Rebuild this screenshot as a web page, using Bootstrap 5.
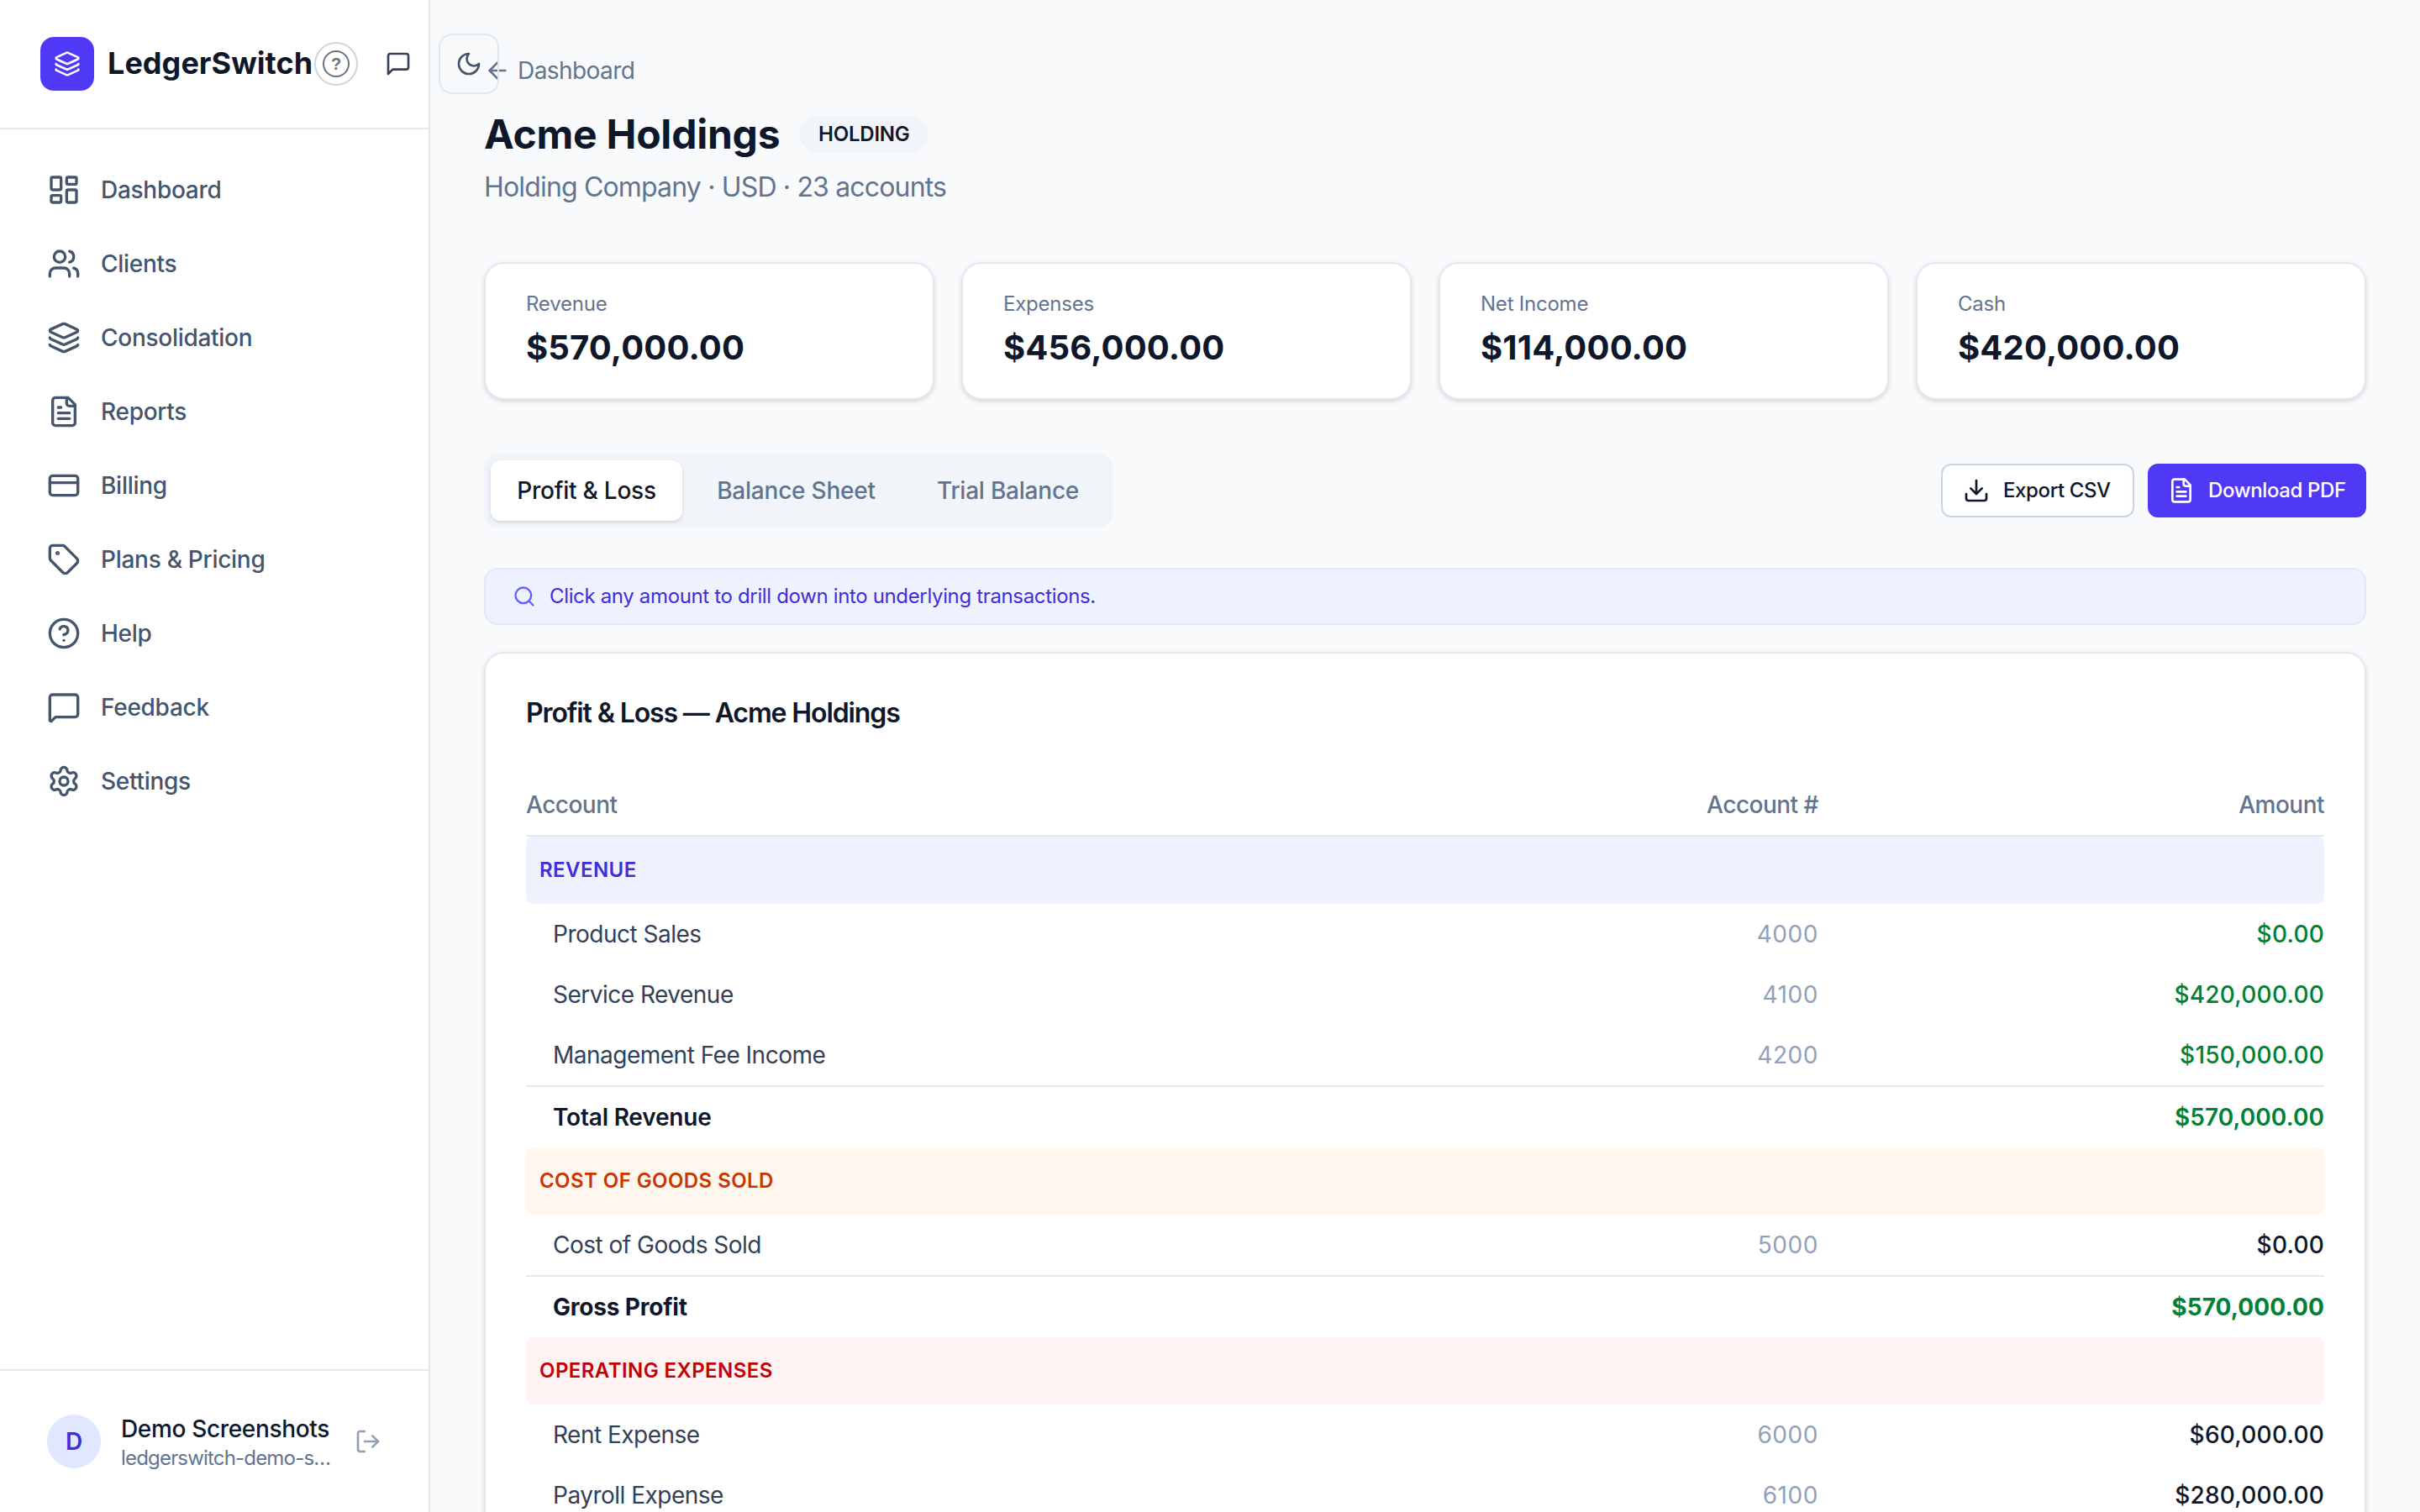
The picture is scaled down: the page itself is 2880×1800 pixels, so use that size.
<!DOCTYPE html>
<html lang="en">
  <head>
    <meta charset="UTF-8">
    <meta name="viewport" content="width=device-width, initial-scale=1.0">
    <title>Acme Holdings - LedgerSwitch</title>
    <link href="https://cdn.jsdelivr.net/npm/bootstrap@5.3.3/dist/css/bootstrap.min.css" rel="stylesheet">
    <style>
      :root { font-size: 32px; }
      body { font-family: Inter, "Liberation Sans", sans-serif; font-size: 28px; line-height: 40px; letter-spacing: -0.008em; color: #0f172b; background: #f8fafc; }
      svg { fill: none; stroke: currentColor; stroke-width: 2; stroke-linecap: round; stroke-linejoin: round; width: 32px; height: 32px; flex-shrink: 0; }
      .fs-12 { font-size: 24px; line-height: 32px; }
      .fw-medium { font-weight: 500; }
      .line { border: 0 solid #e2e8f0; }
      .slate { color: #62748e; }

      /* sidebar */
      .sidebar { width: 512px; border-right-width: 2px; z-index: 2; }
      .brand-bar { height: 154px; border-bottom-width: 2px; }
      .brand { width: 326px; }
      .brand-name { font-size: 36px; font-weight: 700; letter-spacing: 0.001em; padding-bottom: 2px; }
      .logo { width: 64px; height: 64px; border-radius: 16px; background: #4f39f6; }
      .help-btn { width: 52px; height: 52px; border: 2px solid #d1d5dc; color: #6a7282; }
      .help-mark { width: 32px; height: 32px; border: 2px solid #6a7282; font: bold 20px/28px "Liberation Sans", sans-serif; }
      .icon-btn { width: 72px; height: 72px; border-radius: 16px; color: #364153; }
      .theme-btn { border: 2px solid #e2e8f0; color: #45556c; }
      .bar-actions { gap: 12px; }
      .side-nav { gap: 8px; }
      .side-nav .nav-link { height: 80px; padding: 0 24px; gap: 24px; color: #45556c; font-weight: 500; letter-spacing: -0.01em; }
      .side-nav svg { width: 40px; height: 40px; }
      .user-bar { height: 170px; border-top-width: 2px; padding: 0 56px; }
      .avatar { width: 64px; height: 64px; background: #e0e7ff; color: #432dd7; font-weight: 600; }
      .user-text { width: 250px; margin-left: 24px; margin-right: 28px; padding-top: 3px; }
      .user-name { line-height: 36px; letter-spacing: -0.012em; }
      .user-mail { font-size: 24px; line-height: 34px; letter-spacing: -0.034em; }
      .logout { color: #90a1b9; }

      /* page */
      .page { padding: 64px 64px 0; }
      .back-link { gap: 8px; margin-bottom: 24px; letter-spacing: -0.02em; }
      .title-row { gap: 24px; height: 64px; }
      .title-row h1 { font-size: 48px; line-height: 60px; font-weight: 700; letter-spacing: -0.005em; padding-bottom: 1px; }
      .tag { height: 44px; width: 152px; background: #f1f5f9; font-size: 24px; font-weight: 600; line-height: 44px; letter-spacing: -0.01em; }
      .subtitle { font-size: 32px; line-height: 46px; height: 48px; margin: 8px 0 64px; letter-spacing: -0.026em; }
      .panel { background: #fff; border: 2px solid #e2e8f0; border-radius: 24px; box-shadow: 0 2px 6px rgba(0,0,0,.1), 0 2px 4px -2px rgba(0,0,0,.1); }
      .stats { grid-template-columns: repeat(4, 1fr); margin-bottom: 64px; }
      .stat { height: 164px; padding: 32px 48px 0; }
      .stat-value { font-size: 40px; font-weight: 700; line-height: 56px; letter-spacing: 0.004em; margin-top: 8px; }
      .tab-strip { background: #f1f5f9; border-radius: 16px; padding: 8px; gap: 8px; }
      .tab-strip .nav-link { height: 72px; padding: 0; border-radius: 12px; color: #62748e; font-weight: 500; line-height: 72px; text-align: center; }
      .tab-strip .nav-link.active { color: #0f172b; background: #fff; box-shadow: 0 2px 6px rgba(0,0,0,.1), 0 2px 4px -2px rgba(0,0,0,.1); }
      .tab-pl { width: 228px; }
      .tab-bs { width: 255px; }
      .tab-tb { width: 233px; }
      .action { height: 64px; padding: 0 24px; gap: 16px; border-width: 2px; border-radius: 12px; font-size: 24px; font-weight: 500; letter-spacing: -0.016em; }
      .export { width: 230px; border-color: #cad5e2; background: #fff; color: #0f172b; }
      .download { width: 260px; padding: 0 22px; border-color: #4f39f6; background: #4f39f6; color: #fff; }
      .hint { height: 68px; margin: 48px 0 32px; padding: 0 32px; gap: 16px; background: #eef2ff; border: 2px solid #e0e7ff; border-radius: 16px; color: #432dd7; letter-spacing: -0.0145em; }
      .hint svg { width: 28px; height: 28px; color: #615fff; }
      .report { padding: 47px 48px 48px; }
      .report h2 { font-size: 32px; font-weight: 600; line-height: 48px; letter-spacing: -0.035em; margin-bottom: 49px; }

      /* profit and loss table */
      .ledger { table-layout: fixed; border-collapse: separate; border-spacing: 0; color: #0f172b; }
      .ledger th, .ledger td { padding: 0; height: 72px; vertical-align: middle; }
      .ledger thead th { height: 74px; border-bottom: 2px solid #e2e8f0; color: #62748e; font-weight: 500; letter-spacing: -0.018em; }
      .ledger tbody td:first-child { padding-left: 32px; color: #314158; letter-spacing: -0.018em; }
      .ledger td:nth-child(2) { color: #90a1b9; letter-spacing: 0.02em; }
      .ledger td:nth-child(3) { font-weight: 500; letter-spacing: 0.008em; }
      .ledger .gain { color: #008236; }
      .ledger .sum td { height: 74px; border-top: 2px solid #e2e8f0; font-weight: 600; letter-spacing: 0.003em; }
      .ledger .sum td:first-child { color: #0f172b; letter-spacing: -0.007em; }
      .ledger .sum .strong { font-weight: 700; }
      .ledger tbody .band td:first-child { height: 80px; padding-left: 16px; border-radius: 8px; font-size: 24px; font-weight: 600; letter-spacing: 0.018em; }
      .ledger tbody .band-rev td:first-child { background: #eef2ff; color: #432dd7; }
      .ledger tbody .band-cogs td:first-child { background: #fff7ed; color: #ca3500; }
      .ledger tbody .band-opex td:first-child { background: #fef2f2; color: #c10007; }
      .col-num { width: 400px; }
      .col-amt { width: 602px; }
    </style>
  </head>
  <body class="d-flex vh-100 overflow-hidden">
    <aside class="sidebar line bg-white d-flex flex-column flex-shrink-0 position-relative">
      <div class="brand-bar line d-flex align-items-center ps-4">
        <div class="brand d-flex align-items-center gap-2 flex-shrink-0">
          <span class="logo d-flex align-items-center justify-content-center text-white">
            <svg viewBox="0 0 24 24"><path d="M12.83 2.18a2 2 0 0 0-1.66 0L2.6 6.08a1 1 0 0 0 0 1.83l8.58 3.91a2 2 0 0 0 1.66 0l8.58-3.9a1 1 0 0 0 0-1.83z"/><path d="M2 12a1 1 0 0 0 .58.91l8.6 3.91a2 2 0 0 0 1.65 0l8.58-3.9A1 1 0 0 0 22 12"/><path d="M2 17a1 1 0 0 0 .58.91l8.6 3.91a2 2 0 0 0 1.65 0l8.58-3.9A1 1 0 0 0 22 17"/></svg>
          </span>
          <span class="brand-name">LedgerSwitch</span>
        </div>
        <div class="bar-actions d-flex align-items-center flex-shrink-0">
          <a class="help-btn rounded-circle d-flex align-items-center justify-content-center text-decoration-none" href="#"><span class="help-mark rounded-circle text-center">?</span></a>
          <a class="icon-btn d-flex align-items-center justify-content-center" href="#">
            <svg viewBox="0 0 24 24"><path d="M21 15a2 2 0 0 1-2 2H7l-4 4V5a2 2 0 0 1 2-2h14a2 2 0 0 1 2 2z"/></svg>
          </a>
          <a class="icon-btn theme-btn d-flex align-items-center justify-content-center" href="#">
            <svg viewBox="0 0 24 24"><path d="M12 3a6 6 0 0 0 9 9 9 9 0 1 1-9-9Z"/></svg>
          </a>
        </div>
      </div>
      <nav class="side-nav nav flex-column flex-nowrap p-3 flex-grow-1">
        <a class="nav-link d-flex align-items-center" href="#">
          <svg viewBox="0 0 24 24"><rect width="7" height="9" x="3" y="3" rx="1"/><rect width="7" height="5" x="14" y="3" rx="1"/><rect width="7" height="9" x="14" y="12" rx="1"/><rect width="7" height="5" x="3" y="16" rx="1"/></svg>
          Dashboard
        </a>
        <a class="nav-link d-flex align-items-center" href="#">
          <svg viewBox="0 0 24 24"><path d="M16 21v-2a4 4 0 0 0-4-4H6a4 4 0 0 0-4 4v2"/><circle cx="9" cy="7" r="4"/><path d="M22 21v-2a4 4 0 0 0-3-3.87"/><path d="M16 3.13a4 4 0 0 1 0 7.75"/></svg>
          Clients
        </a>
        <a class="nav-link d-flex align-items-center" href="#">
          <svg viewBox="0 0 24 24"><path d="M12.83 2.18a2 2 0 0 0-1.66 0L2.6 6.08a1 1 0 0 0 0 1.83l8.58 3.91a2 2 0 0 0 1.66 0l8.58-3.9a1 1 0 0 0 0-1.83z"/><path d="M2 12a1 1 0 0 0 .58.91l8.6 3.91a2 2 0 0 0 1.65 0l8.58-3.9A1 1 0 0 0 22 12"/><path d="M2 17a1 1 0 0 0 .58.91l8.6 3.91a2 2 0 0 0 1.65 0l8.58-3.9A1 1 0 0 0 22 17"/></svg>
          Consolidation
        </a>
        <a class="nav-link d-flex align-items-center" href="#">
          <svg viewBox="0 0 24 24"><path d="M15 2H6a2 2 0 0 0-2 2v16a2 2 0 0 0 2 2h12a2 2 0 0 0 2-2V7Z"/><path d="M14 2v4a2 2 0 0 0 2 2h4"/><path d="M10 9H8"/><path d="M16 13H8"/><path d="M16 17H8"/></svg>
          Reports
        </a>
        <a class="nav-link d-flex align-items-center" href="#">
          <svg viewBox="0 0 24 24"><rect width="20" height="14" x="2" y="5" rx="2"/><path d="M2 10h20"/></svg>
          Billing
        </a>
        <a class="nav-link d-flex align-items-center" href="#">
          <svg viewBox="0 0 24 24"><path d="M12.586 2.586A2 2 0 0 0 11.172 2H4a2 2 0 0 0-2 2v7.172a2 2 0 0 0 .586 1.414l8.704 8.704a2.426 2.426 0 0 0 3.42 0l6.58-6.58a2.426 2.426 0 0 0 0-3.42z"/><circle cx="7.5" cy="7.5" r=".5" fill="currentColor"/></svg>
          Plans &amp; Pricing
        </a>
        <a class="nav-link d-flex align-items-center" href="#">
          <svg viewBox="0 0 24 24"><circle cx="12" cy="12" r="10"/><path d="M9.09 9a3 3 0 0 1 5.83 1c0 2-3 3-3 3"/><path d="M12 17h.01"/></svg>
          Help
        </a>
        <a class="nav-link d-flex align-items-center" href="#">
          <svg viewBox="0 0 24 24"><path d="M22 17a2 2 0 0 1-2 2H6.828a2 2 0 0 0-1.414.586l-2.202 2.202A.71.71 0 0 1 2 21.286V5a2 2 0 0 1 2-2h16a2 2 0 0 1 2 2z"/></svg>
          Feedback
        </a>
        <a class="nav-link d-flex align-items-center" href="#">
          <svg viewBox="0 0 24 24"><path d="M9.671 4.136a2.34 2.34 0 0 1 4.659 0 2.34 2.34 0 0 0 3.319 1.915 2.34 2.34 0 0 1 2.33 4.033 2.34 2.34 0 0 0 0 3.831 2.34 2.34 0 0 1-2.33 4.033 2.34 2.34 0 0 0-3.319 1.915 2.34 2.34 0 0 1-4.659 0 2.34 2.34 0 0 0-3.32-1.915 2.34 2.34 0 0 1-2.33-4.033 2.34 2.34 0 0 0 0-3.831A2.34 2.34 0 0 1 6.35 6.051a2.34 2.34 0 0 0 3.319-1.915"/><circle cx="12" cy="12" r="3"/></svg>
          Settings
        </a>
      </nav>
      <div class="user-bar line d-flex align-items-center">
        <span class="avatar rounded-circle d-flex align-items-center justify-content-center">D</span>
        <div class="user-text text-nowrap">
          <div class="user-name fw-medium">Demo Screenshots</div>
          <div class="user-mail slate">ledgerswitch-demo-s…</div>
        </div>
        <a class="logout d-flex" href="#">
          <svg viewBox="0 0 24 24"><path d="m16 17 5-5-5-5"/><path d="M21 12H9"/><path d="M9 21H5a2 2 0 0 1-2-2V5a2 2 0 0 1 2-2h4"/></svg>
        </a>
      </div>
    </aside>

    <main class="page flex-grow-1">
      <a class="back-link slate d-flex align-items-center text-decoration-none" href="#">
        <svg viewBox="0 0 24 24"><path d="m12 19-7-7 7-7"/><path d="M19 12H5"/></svg>
        Dashboard
      </a>
      <div class="title-row d-flex align-items-center">
        <h1 class="m-0">Acme Holdings</h1>
        <span class="tag rounded-pill text-center">HOLDING</span>
      </div>
      <p class="subtitle slate">Holding Company · USD · 23 accounts</p>

      <div class="stats d-grid gap-3">
        <div class="panel stat">
          <div class="fs-12 slate">Revenue</div>
          <div class="stat-value">$570,000.00</div>
        </div>
        <div class="panel stat">
          <div class="fs-12 slate">Expenses</div>
          <div class="stat-value">$456,000.00</div>
        </div>
        <div class="panel stat">
          <div class="fs-12 slate">Net Income</div>
          <div class="stat-value">$114,000.00</div>
        </div>
        <div class="panel stat">
          <div class="fs-12 slate">Cash</div>
          <div class="stat-value">$420,000.00</div>
        </div>
      </div>

      <div class="d-flex align-items-center justify-content-between">
        <div class="tab-strip nav">
          <a class="nav-link tab-pl active" href="#">Profit &amp; Loss</a>
          <a class="nav-link tab-bs" href="#">Balance Sheet</a>
          <a class="nav-link tab-tb" href="#">Trial Balance</a>
        </div>
        <div class="d-flex gap-2">
          <button class="action export btn d-flex align-items-center text-nowrap">
            <svg viewBox="0 0 24 24"><path d="M21 15v4a2 2 0 0 1-2 2H5a2 2 0 0 1-2-2v-4"/><path d="m7 10 5 5 5-5"/><path d="M12 15V3"/></svg>
            Export CSV
          </button>
          <button class="action download btn d-flex align-items-center text-nowrap">
            <svg viewBox="0 0 24 24"><path d="M15 2H6a2 2 0 0 0-2 2v16a2 2 0 0 0 2 2h12a2 2 0 0 0 2-2V7Z"/><path d="M14 2v4a2 2 0 0 0 2 2h4"/><path d="M10 9H8"/><path d="M16 13H8"/><path d="M16 17H8"/></svg>
            Download PDF
          </button>
        </div>
      </div>

      <div class="hint fs-12 d-flex align-items-center">
        <svg viewBox="0 0 24 24"><circle cx="11" cy="11" r="8"/><path d="m21 21-4.3-4.3"/></svg>
        Click any amount to drill down into underlying transactions.
      </div>

      <section class="panel report">
        <h2>Profit &amp; Loss — Acme Holdings</h2>
        <table class="ledger w-100">
          <colgroup><col><col class="col-num"><col class="col-amt"></colgroup>
          <thead>
            <tr><th>Account</th><th class="text-end">Account #</th><th class="text-end">Amount</th></tr>
          </thead>
          <tbody>
            <tr class="band band-rev"><td colspan="3">REVENUE</td></tr>
            <tr><td>Product Sales</td><td class="text-end">4000</td><td class="text-end gain">$0.00</td></tr>
            <tr><td>Service Revenue</td><td class="text-end">4100</td><td class="text-end gain">$420,000.00</td></tr>
            <tr><td>Management Fee Income</td><td class="text-end">4200</td><td class="text-end gain">$150,000.00</td></tr>
            <tr class="sum"><td>Total Revenue</td><td></td><td class="text-end gain">$570,000.00</td></tr>
            <tr class="band band-cogs"><td colspan="3">COST OF GOODS SOLD</td></tr>
            <tr><td>Cost of Goods Sold</td><td class="text-end">5000</td><td class="text-end">$0.00</td></tr>
            <tr class="sum"><td class="strong">Gross Profit</td><td></td><td class="text-end gain strong">$570,000.00</td></tr>
            <tr class="band band-opex"><td colspan="3">OPERATING EXPENSES</td></tr>
            <tr><td>Rent Expense</td><td class="text-end">6000</td><td class="text-end">$60,000.00</td></tr>
            <tr><td>Payroll Expense</td><td class="text-end">6100</td><td class="text-end">$280,000.00</td></tr>
          </tbody>
        </table>
      </section>
    </main>
    <script src="https://cdn.jsdelivr.net/npm/bootstrap@5.3.3/dist/js/bootstrap.bundle.min.js"></script>
  </body>
</html>
